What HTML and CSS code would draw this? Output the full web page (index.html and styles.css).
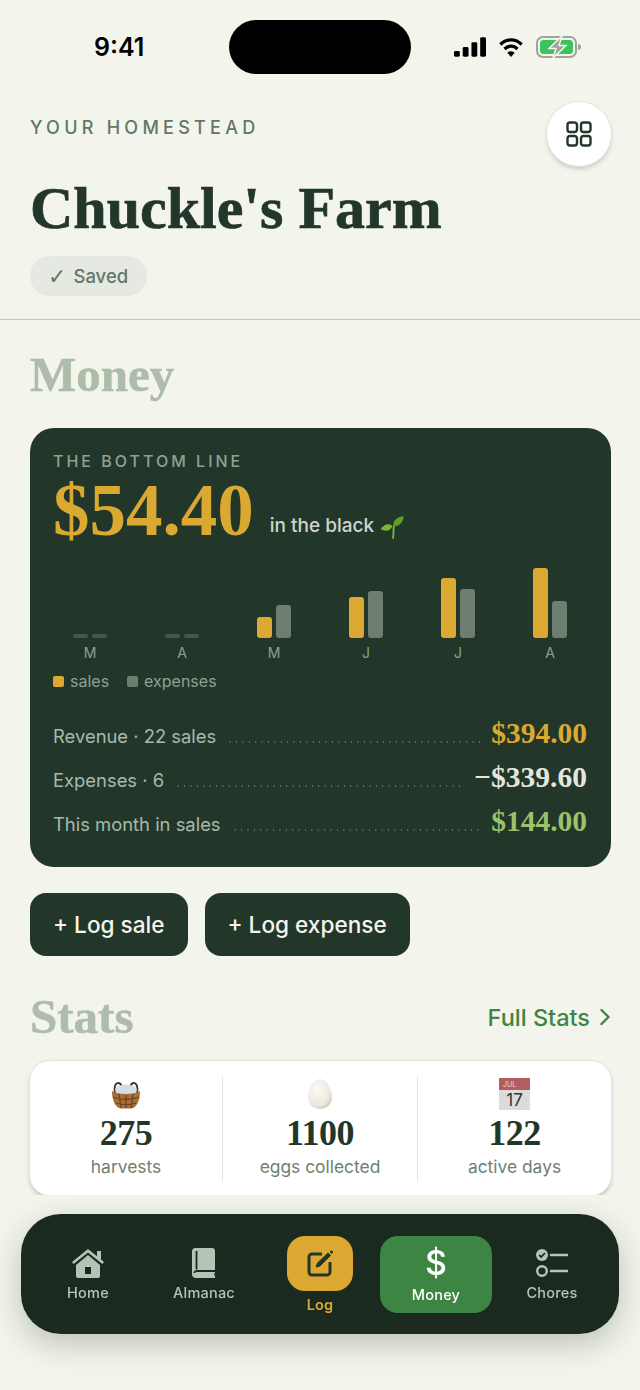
FILE: index.html
```html
<!doctype html>
<html>
    <head>
        <title>Chuckle's Farm</title>
        <meta charset="UTF-8">
        <meta name="viewport" content="width=device-width, initial-scale=1">
        <link rel="stylesheet" href="styles.css">
    </head>
    <body>

       <div class="status">
         <span class="time">9:41</span>
         <span class="island"></span>
         <span class="status-icons">
           <svg width="32" height="20" viewBox="0 0 33 20"><rect x="0" y="14" width="6" height="6" rx="1.5"/><rect x="9" y="10" width="6" height="10" rx="1.5"/><rect x="18" y="5" width="6" height="15" rx="1.5"/><rect x="27" y="0" width="6" height="20" rx="1.5"/></svg>
           <svg width="24" height="20" viewBox="0 0 26 20" preserveAspectRatio="none"><path d="M1.500 7.500a16.500 16.500 0 0 1 23 0" fill="none" stroke="#000" stroke-width="3.400"/><path d="M6 12a10 10 0 0 1 14 0" fill="none" stroke="#000" stroke-width="3.400"/><path d="M13 20l-4 -4.200a5.800 5.800 0 0 1 8 0z"/></svg>
           <svg width="46" height="22" viewBox="0 0 46 22"><rect x="1" y="1" width="39" height="20" rx="6" fill="none" stroke="#9fa59c" stroke-width="2"/><rect x="4" y="4" width="33" height="14" rx="3.500" fill="#3cc45c"/><path d="M42 8c2 0 3 1 3 3s-1 3-3 3z" fill="#9fa59c"/><path d="M26 0L13 12.500h7L17 22l13 -12.500h-7z" fill="#9fa59c" stroke="#f3f5ec" stroke-width="1.500"/></svg>
         </span>
       </div>

       <header class="head">
         <div class="head-text">
           <div class="eyebrow">YOUR HOMESTEAD</div>
           <h1>Chuckle's Farm</h1>
           <div class="saved"><span class="tick">✓</span> Saved</div>
         </div>
         <button type="button" class="grid-btn">
           <svg width="26" height="26" viewBox="0 0 26 26" fill="none" stroke="#22372a" stroke-width="2.400"><rect x="1.500" y="1.500" width="9.500" height="9.500" rx="2.400"/><rect x="15" y="1.500" width="9.500" height="9.500" rx="2.400"/><rect x="1.500" y="15" width="9.500" height="9.500" rx="2.400"/><rect x="15" y="15" width="9.500" height="9.500" rx="2.400"/></svg>
         </button>
       </header>

       <main class="content">
         <h2 class="section-title">Money</h2>

         <section class="money-card">
           <div class="card-label">THE BOTTOM LINE</div>
           <div class="total">
             <span class="amount">$54.40</span>
             <span class="total-note">in the black</span>
             <svg class="sprout" width="24" height="24" viewBox="0 0 24 24"><path d="M13 23c1 -5 0 -9 1 -12" fill="none" stroke="#7fb83a" stroke-width="1.800" stroke-linecap="round"/><path d="M13.500 11c-1 -6 4 -9 10 -10c0 6 -4 11 -10 10z" fill="#5f9f25"/><path d="M12.500 11c-4 -3 -8 -2 -12 3c5 3 10 2 12 -3z" fill="#7ab832"/></svg>
           </div>

           <div class="chart">
             <div class="month">
               <div class="bars"><i class="bar sales empty"></i><i class="bar exp empty"></i></div>
               <span>M</span>
             </div>
             <div class="month">
               <div class="bars"><i class="bar sales empty"></i><i class="bar exp empty"></i></div>
               <span>A</span>
             </div>
             <div class="month">
               <div class="bars"><i class="bar sales" style="height:21px"></i><i class="bar exp" style="height:33px"></i></div>
               <span>M</span>
             </div>
             <div class="month">
               <div class="bars"><i class="bar sales" style="height:41px"></i><i class="bar exp" style="height:47px"></i></div>
               <span>J</span>
             </div>
             <div class="month">
               <div class="bars"><i class="bar sales" style="height:60px"></i><i class="bar exp" style="height:49px"></i></div>
               <span>J</span>
             </div>
             <div class="month">
               <div class="bars"><i class="bar sales" style="height:70px"></i><i class="bar exp" style="height:37px"></i></div>
               <span>A</span>
             </div>
           </div>

           <div class="legend">
             <span class="key"><i class="swatch sales"></i>sales</span>
             <span class="key"><i class="swatch exp"></i>expenses</span>
           </div>

           <ul class="ledger">
             <li><span>Revenue · 22 sales</span><i class="dots"></i><b class="gold">$394.00</b></li>
             <li><span>Expenses · 6</span><i class="dots"></i><b class="pale">−$339.60</b></li>
             <li><span>This month in sales</span><i class="dots"></i><b class="green">$144.00</b></li>
           </ul>
         </section>

         <div class="actions">
           <button type="button" class="action">+ Log sale</button>
           <button type="button" class="action">+ Log expense</button>
         </div>

         <div class="stats-head">
           <h2 class="section-title">Stats</h2>
           <a class="full-stats">Full Stats
             <svg width="12" height="18" viewBox="0 0 12 18" fill="none" stroke="#3d8542" stroke-width="2.400" stroke-linecap="round" stroke-linejoin="round"><path d="M2.500 2l7 7-7 7"/></svg>
           </a>
         </div>

         <section class="stats-card">
           <div class="stat">
             <svg class="stat-icon" width="32" height="30" viewBox="0 0 32 30">
               <path d="M5 14C3 3 10 1 12 8M27 14C29 3 22 1 20 8" fill="none" stroke="#4a2f1c" stroke-width="2"/>
               <ellipse cx="16" cy="11" rx="11" ry="5.500" fill="#d5dee6"/>
               <path d="M2 12c6 4 22 4 28 0c0 9 -3 17 -9 17.500h-10c-6 -.5 -9 -8.500 -9 -17.500z" fill="#a86f34"/>
               <path d="M3 18c7 3 19 3 26 0M6 24c6 2 14 2 20 0M9 15l2 14M16 16v13M23 15l-2 14" stroke="#6e431f" stroke-width="1.300" fill="none"/>
             </svg>
             <b>275</b>
             <span>harvests</span>
           </div>
           <div class="stat">
             <svg class="stat-icon" width="32" height="30" viewBox="0 0 32 30">
               <defs><radialGradient id="egg" cx="40%" cy="35%" r="75%"><stop offset="0" stop-color="#fbfaf6"/><stop offset="0.7" stop-color="#ece8de"/><stop offset="1" stop-color="#c7c1b2"/></radialGradient></defs>
               <path d="M16 0c6 0 12 9 12 18c0 7 -5 12 -12 12s-12 -5 -12 -12c0 -9 6 -18 12 -18z" fill="url(#egg)"/>
             </svg>
             <b>1100</b>
             <span>eggs collected</span>
           </div>
           <div class="stat">
             <div class="calendar">
               <span class="cal-top">JUL</span>
               <span class="cal-day">17</span>
             </div>
             <b>122</b>
             <span>active days</span>
           </div>
         </section>
       </main>

       <nav class="tabbar">
         <a class="tab">
           <svg width="34" height="30" viewBox="0 0 34 30" fill="#b4c4b6"><path d="M1 14L17 1l9 7.300V3h4v8.500l3 2.500-1.600 2L17 4.500 2.600 16z"/><path fill-rule="evenodd" d="M5 17L17 7l12 10v11a2 2 0 0 1-2 2H7a2 2 0 0 1-2-2zM14 19v7h6v-7z"/></svg>
           <span>Home</span>
         </a>
         <a class="tab">
           <svg width="26" height="30" viewBox="0 0 26 30"><path d="M4 0h17a3 3 0 0 1 3 3v21c0 1-.5 2-1 2.500l1 1.500v2H5c-2.500 0-4-1.500-4-4V3c0-1.500 1.500-3 3-3z" fill="#b4c4b6"/><path d="M5.500 3v18.500M3 25c.5-1.500 1.500-2 3-2h18" fill="none" stroke="#1b2a1f" stroke-width="1.800"/></svg>
           <span>Almanac</span>
         </a>
         <a class="tab log">
           <span class="log-tile">
             <svg width="30" height="30" viewBox="0 0 30 30" fill="none" stroke="#22372a"><path d="M17 5H7a3 3 0 0 0-3 3v15a3 3 0 0 0 3 3h15a3 3 0 0 0 3-3V13" stroke-width="3"/><path d="M11 18l1.500-4L23 4l2.500 2.500L15 17z" fill="#22372a" stroke-width="1"/><circle cx="26.500" cy="3" r="1.600" fill="#22372a" stroke="none"/></svg>
           </span>
           <span>Log</span>
         </a>
         <a class="tab current">
           <span class="dollar">$</span>
           <span>Money</span>
         </a>
         <a class="tab">
           <svg width="32" height="30" viewBox="0 0 32 30" fill="none"><circle cx="6" cy="7" r="6" fill="#b4c4b6"/><path d="M3.200 7l2 2 3.800-4" stroke="#1b2a1f" stroke-width="1.800"/><circle cx="6" cy="23" r="4.800" stroke="#b4c4b6" stroke-width="2.400"/><path d="M15 7h16M15 23h16" stroke="#b4c4b6" stroke-width="2.600" stroke-linecap="round"/></svg>
           <span>Chores</span>
         </a>
       </nav>

    </body>
</html>
```

FILE: styles.css
```css
body {
  margin: 0;
  background: #f3f5ec;
  font-family: Inter, "Liberation Sans", sans-serif;
  color: #22372a;
}

button {
  font-family: inherit;
  border: 0;
}

/* status bar */
.status {
  height: 94px;
  display: flex;
  align-items: flex-start;
  padding: 20px 0 0 94px;
  box-sizing: border-box;
}

.time {
  flex: none;
  font-size: 25px;
  font-weight: 600;
  color: #000;
  width: 135px;
  line-height: 54px;
}

.island {
  flex: none;
  width: 182px;
  height: 54px;
  border-radius: 27px;
  background: #000;
}

.status-icons {
  margin-left: 43px;
  height: 54px;
  display: flex;
  align-items: center;
  gap: 13px;
}

/* header */
.head {
  display: flex;
  justify-content: space-between;
  align-items: flex-start;
  padding: 8px 29px 23px 30px;
  border-bottom: 1px solid #c3c9bd;
}

.eyebrow {
  font-size: 18px;
  font-weight: 500;
  letter-spacing: 4.25px;
  color: #637766;
  line-height: 22px;
  margin-top: 15px;
}

h1 {
  font-family: "Liberation Serif", serif;
  font-size: 60px;
  font-weight: 700;
  line-height: 64px;
  margin: 37px 0 16px;
  color: #22372a;
  -webkit-text-stroke: 0.7px #22372a;
}

.saved {
  display: inline-flex;
  align-items: center;
  gap: 7px;
  height: 40px;
  padding: 0 19px 0 18px;
  border-radius: 20px;
  background: #e6e9e1;
  color: #637766;
  font-size: 18.5px;
  font-weight: 500;
}

.tick {
  font-family: "DejaVu Sans", sans-serif;
  font-size: 22px;
}

.grid-btn {
  width: 64px;
  height: 64px;
  border-radius: 50%;
  background: #fff;
  display: flex;
  align-items: center;
  justify-content: center;
  padding: 0;
  box-shadow: 0 0 0 1px #e3e5dd, 0 3px 4px rgba(60, 70, 55, 0.25);
}

/* sections */
.content {
  padding: 27px 29px 0 30px;
}

.section-title {
  font-family: "Liberation Serif", serif;
  font-size: 49px;
  font-weight: 700;
  line-height: 56px;
  color: #aebcaa;
  margin: 0;
  -webkit-text-stroke: 0.5px #aebcaa;
}

.money-card {
  margin-top: 25px;
  height: 439px;
  box-sizing: border-box;
  background: #22372a;
  border-radius: 24px;
  padding: 23px 24px 0 23px;
}

.card-label {
  font-size: 16px;
  font-weight: 500;
  letter-spacing: 3px;
  color: #8fa193;
  line-height: 20px;
}

.total {
  display: flex;
  align-items: baseline;
  margin-top: 7px;
}

.amount {
  font-family: "Liberation Serif", serif;
  font-size: 73px;
  font-weight: 700;
  line-height: 66px;
  color: #dba932;
}

.total-note {
  margin-left: 16px;
  font-size: 19px;
  font-weight: 500;
  color: #cdd6cc;
  transform: translateY(-3px);
}

.sprout {
  margin-left: 6px;
  align-self: flex-end;
  margin-bottom: 5px;
}

/* chart */
.chart {
  display: grid;
  grid-template-columns: repeat(6, 1fr);
  column-gap: 18px;
  margin-top: 24px;
}

.month {
  display: flex;
  flex-direction: column;
  align-items: center;
  font-size: 14px;
  color: #8fa193;
}

.month span {
  line-height: 18px;
  margin-top: 6px;
}

.bars {
  height: 70px;
  display: flex;
  align-items: flex-end;
  gap: 4px;
}

.bar {
  display: block;
  width: 15px;
  border-radius: 3px;
}

.bar.sales, .swatch.sales { background: #dba932; }
.bar.exp, .swatch.exp { background: #6d7d70; }

.bar.empty {
  height: 4px;
  background: #44574a;
  border-radius: 2px;
}

.legend {
  display: flex;
  gap: 18px;
  margin-top: 9px;
  font-size: 16px;
  color: #8fa193;
  line-height: 20px;
}

.key {
  display: flex;
  align-items: center;
  gap: 6px;
}

.swatch {
  width: 11px;
  height: 11px;
  border-radius: 2px;
}

/* ledger */
.ledger {
  list-style: none;
  margin: 20px 0 0;
  padding: 0;
}

.ledger li {
  display: flex;
  align-items: baseline;
  gap: 11px;
  height: 44px;
  line-height: 44px;
  font-size: 18.4px;
  color: #a9b8ab;
}

.ledger b {
  font-family: "Liberation Serif", serif;
  font-size: 29.5px;
  font-weight: 700;
}

.dots {
  flex: 1;
  height: 2px;
  background-image: radial-gradient(circle, #66786b 0.8px, transparent 1px);
  background-size: 6.4px 2px;
}

.gold { color: #dba932; }
.pale { color: #e3e7df; }
.green { color: #9dc26b; }

/* buttons */
.actions {
  display: flex;
  gap: 17px;
  margin-top: 26px;
}

.action {
  height: 63px;
  padding: 0 23px;
  border-radius: 16px;
  background: #22372a;
  color: #f3f5ec;
  font-size: 22.6px;
  font-weight: 500;
}

/* stats */
.stats-head {
  display: flex;
  justify-content: space-between;
  align-items: center;
  margin-top: 33px;
}

.full-stats {
  display: flex;
  align-items: center;
  gap: 9px;
  color: #3d8542;
  font-size: 23.5px;
  font-weight: 500;
}

.stats-card {
  margin-top: 16px;
  height: 134px;
  box-sizing: border-box;
  padding: 15px 0 14px;
  display: grid;
  grid-template-columns: 192px 195px 1fr;
  background: #fff;
  border-radius: 20px;
  box-shadow: 0 0 0 1px #e3e5dd, 0 3px 4px rgba(60, 70, 55, 0.3);
}

.stat {
  display: flex;
  flex-direction: column;
  align-items: center;
  border-left: 1px solid #e3e5dd;
}

.stat:first-child { border-left: 0; }

.stat-icon { margin-top: 3px; }

.stat b {
  font-family: "Liberation Serif", serif;
  font-size: 36px;
  font-weight: 700;
  line-height: 38px;
  color: #22372a;
  margin-top: 5px;
  letter-spacing: -0.5px;
}

.stat > span {
  font-size: 17.4px;
  color: #6f7f72;
  line-height: 24px;
  margin-top: 3px;
}

.calendar {
  width: 31px;
  height: 32px;
  background: #dcdcdc;
  display: flex;
  flex-direction: column;
  align-items: center;
  overflow: hidden;
  margin-top: 2px;
  margin-bottom: -1px;
}

.cal-top {
  display: block;
  width: 100%;
  height: 12px;
  background: #b55c60;
  color: #f0d8d8;
  font-size: 7px;
  line-height: 13px;
  padding-left: 4px;
  box-sizing: border-box;
}

.cal-day {
  font-size: 17px;
  line-height: 21px;
  color: #333;
}

/* tab bar, floats over the page */
.tabbar {
  position: fixed;
  left: 21px;
  right: 21px;
  bottom: 56px;
  height: 120px;
  box-sizing: border-box;
  padding: 22px 11px 0;
  display: grid;
  grid-template-columns: repeat(5, 1fr);
  column-gap: 4px;
  align-items: start;
  background: #1b2a1f;
  border-radius: 40px;
  box-shadow: 0 10px 30px rgba(30, 40, 30, 0.25);
}

.tab {
  display: flex;
  flex-direction: column;
  align-items: center;
  padding-top: 12px;
  gap: 6px;
  font-size: 14.5px;
  font-weight: 500;
  letter-spacing: 0.2px;
  color: #b4c4b6;
}

.tab svg { display: block; }

.log {
  padding-top: 0;
  color: #dba932;
  font-weight: 600;
  gap: 5px;
}

.log-tile {
  width: 66px;
  height: 55px;
  border-radius: 18px;
  background: #dba932;
  display: flex;
  align-items: center;
  justify-content: center;
}

.current {
  height: 77px;
  box-sizing: border-box;
  background: #3d8542;
  border-radius: 18px;
  color: #fff;
  gap: 4px;
  padding-top: 8px;
}

.dollar {
  font-size: 34px;
  font-weight: 500;
  line-height: 38px;
}
```
